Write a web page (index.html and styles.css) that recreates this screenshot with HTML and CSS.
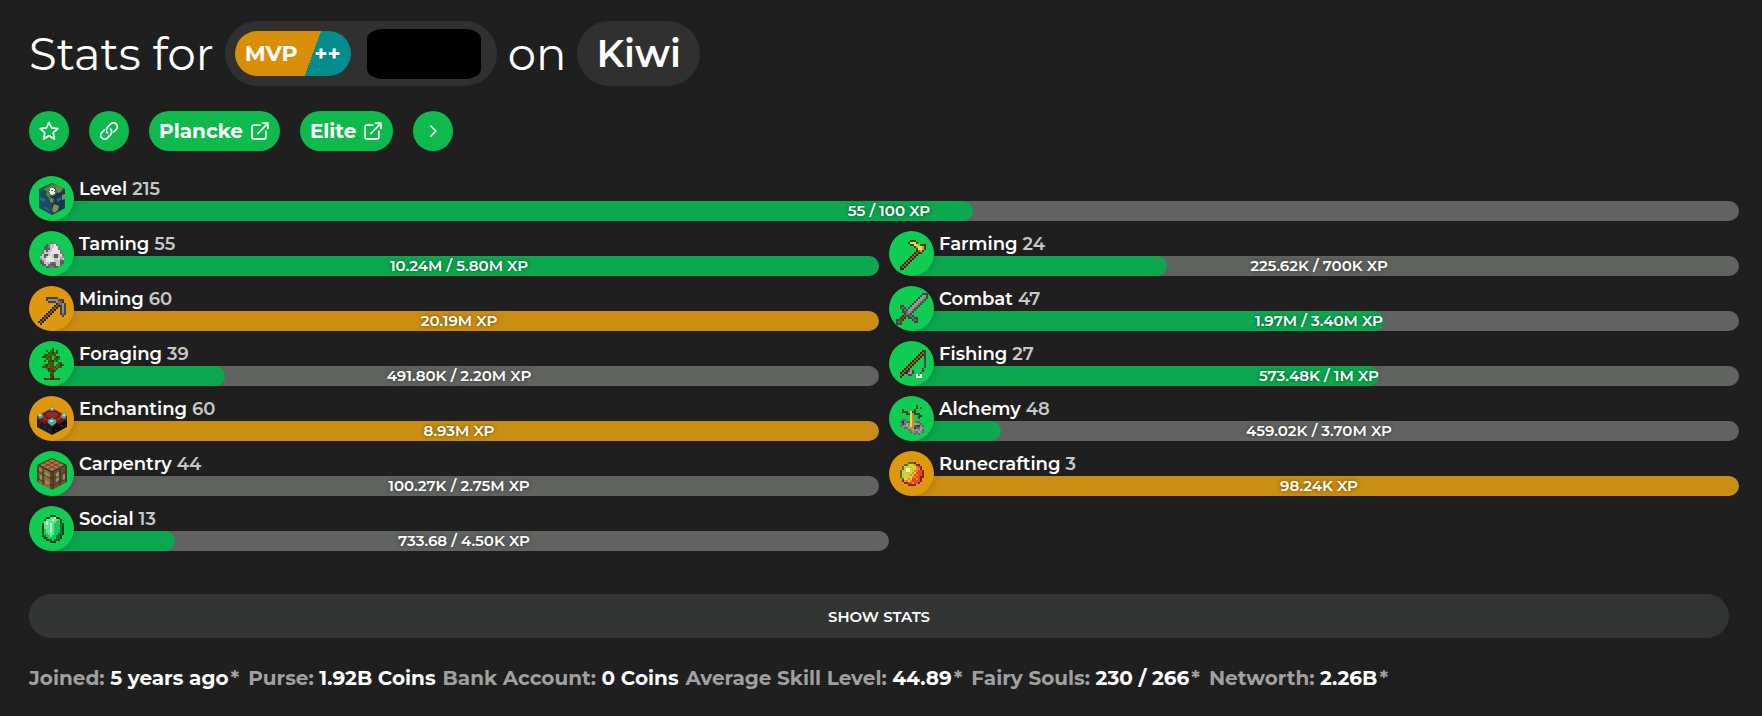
FILE: index.html
```html
<!DOCTYPE html>
<html lang="en">

<head>
  <meta charset="UTF-8" />
  <meta name="viewport" content="width=device-width, initial-scale=1.0" />
  <title>Stats on Kiwi</title>
  <link rel="stylesheet" href="styles.css">
</head>

<body>
  <main class="profile">
    <h1 class="title">
      <span>Stats for</span>
      <span class="pill player">
        <span class="rank"><span>MVP</span><span class="plus">++</span></span>
        <span class="player-name"></span>
      </span>
      <span>on</span>
      <span class="pill">Kiwi</span>
    </h1>

    <nav class="links">
      <button class="chip round" aria-label="Favorite">
        <svg class="icon" viewBox="0 0 24 24"><path d="M12 1.500l3.100 6.800 7.400.8-5.500 5 1.500 7.400-6.500-3.700-6.500 3.700 1.500-7.400-5.500-5 7.400-.8z" /></svg>
      </button>
      <button class="chip round" aria-label="Copy link">
        <svg class="icon" viewBox="0 0 24 24"><path d="M10.300 14.200a4.600 4.600 0 0 1-.3-6.500l4.200-4.200a4.600 4.600 0 0 1 6.500 6.500l-3 3M13.700 9.800a4.600 4.600 0 0 1 .3 6.500l-4.200 4.200a4.600 4.600 0 0 1-6.500-6.500l3-3" /></svg>
      </button>
      <a class="chip" href="#plancke">Plancke
        <svg class="icon" viewBox="0 0 24 24"><path d="M12 5H4.500a2 2 0 0 0-2 2v12.500a2 2 0 0 0 2 2H17a2 2 0 0 0 2-2V12M15 2.500h6.500V9M21.500 2.500L9.500 15" /></svg>
      </a>
      <a class="chip" href="#elite">Elite
        <svg class="icon" viewBox="0 0 24 24"><path d="M12 5H4.500a2 2 0 0 0-2 2v12.500a2 2 0 0 0 2 2H17a2 2 0 0 0 2-2V12M15 2.500h6.500V9M21.500 2.500L9.500 15" /></svg>
      </a>
      <button class="chip round" aria-label="More links">
        <svg class="icon" viewBox="0 0 24 24"><path d="M9.500 6l6 6-6 6" /></svg>
      </button>
    </nav>

    <section class="skills">
      <div class="skill wide">
        <div class="skill-icon">
          <svg viewBox="0 0 32 32">
            <path fill="#1d4a63" d="M16 0l13 6v19l-13 7-13-7V6z" />
            <path fill="#17384f" d="M16 13l13-7v19l-13 7z" />
            <path fill="#5f7f3c" d="M9 5l7-4 4 1-2 4 3 3-3 4-3-1-2 3-3-3 1-4-4-1z" />
            <path fill="#6c8a43" d="M19 2l8 3-2 4-3 1-2-3zM13 14l5 2-1 4-3-1z" />
            <path fill="#8e8a52" d="M18 21l5 2-1 4-4 3-2-3zM26 12l3-1v5l-3 1z" />
            <path fill="#e7eef0" d="M14 5h4v1h1v2h-1v1h1v2h-2v1h-2v-1h-1V9h-1V8h1z" />
            <path fill="#5f7f3c" d="M15 7h2v1h-2z" />
            <path fill="#2f6883" d="M4 14l5 2v3l-5-2zM8 23l5 3v2l-5-3zM21 16l4-2v3l-4 2z" />
          </svg>
        </div>
        <div class="skill-name">Level <span class="level">215</span></div>
        <div class="bar"><div class="fill" style="width: 55%"></div><span class="xp">55 / 100 XP</span></div>
      </div>

      <div class="skill">
        <div class="skill-icon"><svg viewBox="0 0 16 16" data-icon="egg"></svg></div>
        <div class="skill-name">Taming <span class="level">55</span></div>
        <div class="bar"><div class="fill" style="width: 100%"></div><span class="xp">10.24M / 5.80M XP</span></div>
      </div>
      <div class="skill">
        <div class="skill-icon"><svg viewBox="0 0 16 16" data-icon="hoe"></svg></div>
        <div class="skill-name">Farming <span class="level">24</span></div>
        <div class="bar"><div class="fill" style="width: 32.2%"></div><span class="xp">225.62K / 700K XP</span></div>
      </div>

      <div class="skill maxed">
        <div class="skill-icon"><svg viewBox="0 0 16 16" data-icon="pickaxe"></svg></div>
        <div class="skill-name">Mining <span class="level">60</span></div>
        <div class="bar"><div class="fill" style="width: 100%"></div><span class="xp">20.19M XP</span></div>
      </div>
      <div class="skill">
        <div class="skill-icon"><svg viewBox="0 0 16 16" data-icon="sword"></svg></div>
        <div class="skill-name">Combat <span class="level">47</span></div>
        <div class="bar"><div class="fill" style="width: 57.9%"></div><span class="xp">1.97M / 3.40M XP</span></div>
      </div>

      <div class="skill">
        <div class="skill-icon"><svg viewBox="0 0 16 16" data-icon="sapling"></svg></div>
        <div class="skill-name">Foraging <span class="level">39</span></div>
        <div class="bar"><div class="fill" style="width: 22.4%"></div><span class="xp">491.80K / 2.20M XP</span></div>
      </div>
      <div class="skill">
        <div class="skill-icon"><svg viewBox="0 0 16 16" data-icon="rod"></svg></div>
        <div class="skill-name">Fishing <span class="level">27</span></div>
        <div class="bar"><div class="fill" style="width: 57.3%"></div><span class="xp">573.48K / 1M XP</span></div>
      </div>

      <div class="skill maxed">
        <div class="skill-icon">
          <svg viewBox="0 0 32 32">
            <path fill="#1c1926" d="M1 13l15 8v11L1 24z" />
            <path fill="#0e0c14" d="M31 13l-15 8v11l15-8z" />
            <path fill="#a01f1f" d="M16 5l15 8-15 8-15-8z" />
            <path fill="#7a1518" d="M1 13l15 8 15-8v4l-5 2-2 2-3-1-5 4-5-4-3 1-2-2-5-2z" />
            <path fill="#b02c2a" d="M16 6l12 7-12 6-12-6z" />
            <path fill="#54201f" d="M11 8h10l4 4-4 4H11l-4-4z" />
            <path fill="#8b2b2b" d="M12 9h8l3 3-3 3h-8l-3-3z" />
            <path fill="#39b5a5" d="M14 5l2-1 2 1v2l-2 1-2-1zM2 12l2-2 3 2v2l-3 2-2-2zM25 12l3-2 2 2v2l-2 2-3-2zM12 17l4-2 4 2v3l-4 3-4-3z" />
            <path fill="#9cebdc" d="M15 5h2v1h-2zM3 11h2v2H3zM27 11h2v2h-2zM14 17h3v2h-3z" />
            <path fill="#332b45" d="M3 19h2v2H3zM8 23h2v2H8zM12 26h2v2h-2zM19 27h2v1h-2zM25 22h2v2h-2zM6 25h1v1H6z" />
          </svg>
        </div>
        <div class="skill-name">Enchanting <span class="level">60</span></div>
        <div class="bar"><div class="fill" style="width: 100%"></div><span class="xp">8.93M XP</span></div>
      </div>
      <div class="skill">
        <div class="skill-icon"><svg viewBox="0 0 16 16" data-icon="brewing"></svg></div>
        <div class="skill-name">Alchemy <span class="level">48</span></div>
        <div class="bar"><div class="fill" style="width: 12.4%"></div><span class="xp">459.02K / 3.70M XP</span></div>
      </div>

      <div class="skill">
        <div class="skill-icon">
          <svg viewBox="0 0 32 32">
            <path fill="#8a6b40" d="M1 7l15 8v17L1 24z" />
            <path fill="#67502e" d="M31 7l-15 8v17l15-8z" />
            <path fill="#4a2d1a" d="M16 0l15 7-15 8L1 7z" />
            <path fill="#b4764a" d="M16 1l12 6-12 6L4 7z" />
            <path stroke="#6b4226" fill="none" d="M8 5l12 6M12 3l12 6M12 11l12-6M8 9l12-6" />
            <path stroke="#33240f" fill="none" d="M2 8v16M7 10v17M15 14v17M17 14v17M24 11v16M30 8v16" />
            <path stroke="#49351b" fill="none" d="M1 13l15 8 15-8M1 20l15 8 15-8" />
            <path fill="#a98a58" d="M3 10l3 2v2l-3-2zM9 14l4 2v3l-4-2zM9 22l4 2v3l-4-2zM20 21l3-2v3l-3 2z" />
            <path fill="#8d8e8b" d="M4 17l2 1v4l-2-1zM20 15l3-1v4l-3 1zM27 17l2-1v5l-2 1z" />
          </svg>
        </div>
        <div class="skill-name">Carpentry <span class="level">44</span></div>
        <div class="bar"><div class="fill" style="width: 3.6%"></div><span class="xp">100.27K / 2.75M XP</span></div>
      </div>
      <div class="skill maxed">
        <div class="skill-icon"><svg viewBox="0 0 16 16" data-icon="cream"></svg></div>
        <div class="skill-name">Runecrafting <span class="level">3</span></div>
        <div class="bar"><div class="fill" style="width: 100%"></div><span class="xp">98.24K XP</span></div>
      </div>

      <div class="skill">
        <div class="skill-icon"><svg viewBox="0 0 16 16" data-icon="emerald"></svg></div>
        <div class="skill-name">Social <span class="level">13</span></div>
        <div class="bar"><div class="fill" style="width: 16.3%"></div><span class="xp">733.68 / 4.50K XP</span></div>
      </div>
    </section>

    <button class="show-stats">SHOW STATS</button>

    <div class="summary">
      <span>Joined: <b>5 years ago</b><i>*</i></span>
      <span>Purse: <b>1.92B Coins</b></span>
      <span>Bank Account: <b>0 Coins</b></span>
      <span>Average Skill Level: <b>44.89</b><i>*</i></span>
      <span>Fairy Souls: <b>230 / 266</b><i>*</i></span>
      <span>Networth: <b>2.26B</b><i>*</i></span>
    </div>
  </main>

  <script src="icons.js"></script>
</body>

</html>
```

FILE: styles.css
```css
* {
  box-sizing: border-box;
}

body {
  background: #1f1f1f;
  color: white;
  font-family: Montserrat, Inter, "Liberation Sans", sans-serif;
  margin: 0;
}

button {
  border: none;
  color: inherit;
  font-family: inherit;
  cursor: pointer;
}

.profile {
  padding: 21px 33px 24px 29px;
}

.title {
  display: flex;
  flex-wrap: wrap;
  align-items: center;
  gap: 11px;
  margin: 0 0 25px;
  font-size: 45px;
  font-weight: 400;
  line-height: 65px;
}

.pill {
  height: 65px;
  padding: 0 19px;
  border-radius: 33px;
  background: #303030;
  font-size: 38px;
  font-weight: 600;
}

.player {
  display: flex;
  align-items: center;
  gap: 16px;
  padding: 0 16px 0 10px;
}

.rank {
  display: flex;
  align-items: center;
  justify-content: space-between;
  width: 116px;
  height: 45px;
  padding: 0 10px;
  border-radius: 23px;
  background: linear-gradient(110deg, #d88f07 65%, #038d8d 65%);
  font-size: 22px;
  font-weight: 700;
}

.player-name {
  width: 114px;
  height: 50px;
  border-radius: 16px / 10px;
  background: black;
}

.links {
  display: flex;
  flex-wrap: wrap;
  gap: 20px;
  margin-bottom: 25px;
}

.chip {
  display: flex;
  align-items: center;
  justify-content: center;
  gap: 7px;
  height: 40px;
  padding: 0 10px;
  border-radius: 20px;
  background: #0fba4c;
  color: white;
  font-size: 20px;
  font-weight: 700;
  text-decoration: none;
}

.round {
  width: 40px;
}

.icon {
  flex: none;
  width: 20px;
  height: 20px;
  fill: none;
  stroke: white;
  stroke-width: 2;
  stroke-linecap: round;
  stroke-linejoin: round;
}

.skills {
  display: grid;
  grid-template-columns: 1fr 1fr;
  row-gap: 10px;
  margin-right: -20px;
}

.skill {
  display: grid;
  grid-template-columns: 7px 38px 1fr;
  grid-template-rows: 25px 20px;
  margin-right: 10px;
}

.skill:last-child {
  margin-right: 0;
}

.wide {
  grid-column: 1 / 3;
}

.skill-icon {
  grid-area: 1 / 1 / 3 / 3;
  z-index: 1;
  display: flex;
  align-items: center;
  justify-content: center;
  border-radius: 50%;
  background: #0fcd53;
  box-shadow: 0 0 10px rgba(0, 0, 0, 0.2);
}

.skill-icon svg {
  width: 32px;
  height: 32px;
}

.skill-name {
  grid-area: 1 / 3;
  padding-left: 5px;
  font-size: 18px;
  font-weight: 600;
  line-height: 27px;
}

.level {
  color: #c7c7c7;
}

.bar {
  grid-area: 2 / 2 / 3 / 4;
  display: grid;
  border-radius: 0 10px 10px 20px;
  background: #616361;
  overflow: hidden;
}

.fill {
  grid-area: 1 / 1;
  border-radius: 0 10px 10px 0;
  background: #0ca84f;
}

.maxed .skill-icon {
  background: #dd980e;
}

.maxed .fill {
  background: #cb8e13;
}

.xp {
  grid-area: 1 / 1;
  padding-left: 3px;
  font-size: 15px;
  font-weight: 600;
  line-height: 20px;
  text-align: center;
  text-shadow: 0 0 4px rgba(0, 0, 0, 0.5);
}

.show-stats {
  display: block;
  width: 100%;
  height: 44px;
  margin: 43px 0 27px;
  border-radius: 22px;
  background: #333534;
  font-size: 15px;
  font-weight: 600;
}

.summary {
  display: flex;
  flex-wrap: wrap;
  gap: 7px;
  color: #a0a0a0;
  font-size: 20px;
  font-weight: 700;
  line-height: 26px;
}

.summary b {
  color: white;
  font-weight: 700;
}

.summary i {
  padding: 0 2px;
  font-style: normal;
}
```

FILE: icons.js
```js
// one character per pixel, looked up in the icon's palette
const icons = {
  egg: {
    colors: { d: '#777777', s: '#8f8f8f', l: '#c4c4c4', w: '#e6e6e6', k: '#5c5c5c' },
    rows: [
      '................',
      '................',
      '.......dd.......',
      '.....kdllwd.....',
      '....kkdllwwd....',
      '....kkklwwwd....',
      '...dlkllwwwwd...',
      '...dlllwwwwwd...',
      '..dlkklwlkklwd..',
      '..llklwwlkklls..',
      '..sllwwwwllwsl..',
      '..kslwwwwlllkk..',
      '..kkllldkdllkk..',
      '...kkldkkkllk...',
      '.....kkddkk.....',
      '................'
    ]
  },
  hoe: {
    colors: { k: '#4b3d0c', y: '#e8dc52', o: '#b5a62d', b: '#8a6529', s: '#3c260d' },
    rows: [
      '................',
      '.......kkk......',
      '......kyyyk.....',
      '.......kkyyokkk.',
      '.........koyyok.',
      '..........kyyok.',
      '..........sbok..',
      '.........sbsk...',
      '........sbs.....',
      '.......sbs......',
      '......sbs.......',
      '.....sbs........',
      '....sbs.........',
      '...sbs..........',
      '..sbs...........',
      '..ss............'
    ]
  },
  pickaxe: {
    colors: { k: '#414344', g: '#8b8e91', h: '#6a6c6f', b: '#806127', s: '#33240f' },
    rows: [
      '................',
      '................',
      '.....kkkkkk.....',
      '.....kgggggkkk..',
      '......kkkkghbs..',
      '..........sbhgk.',
      '.........sbskgk.',
      '........sbs.kgk.',
      '.......sbs..kgk.',
      '......sbs...kgk.',
      '.....sbs....khk.',
      '....sbs......k..',
      '...sbs..........',
      '..sbs...........',
      '.sbs............',
      '..s.............'
    ]
  },
  sword: {
    colors: { k: '#434543', g: '#989a98', h: '#6f716f', b: '#805420', s: '#3d2b13' },
    rows: [
      '.............kkk',
      '............kggk',
      '...........kgghk',
      '..........kgghk.',
      '.........kgghk..',
      '........kgghk...',
      '..kk...kgghk....',
      '..khk.kgghk.....',
      '...khkgghk......',
      '...kkhghk.......',
      '....khhk........',
      '...sbkkhk.......',
      '..sbs.kkhkk.....',
      'kkbs....khk.....',
      'khk......kk.....',
      'kkk.............'
    ]
  },
  sapling: {
    colors: { g: '#2e5b12', l: '#3f7318', b: '#5a4a12', d: '#3b3208' },
    rows: [
      '........g.......',
      '.....g.lg.g.....',
      '......gldlg.....',
      '....gglblg......',
      '...gdlgb.ldg....',
      '.....glb.ggl....',
      '....g.gbdlg.....',
      '......gbb..gg...',
      '....ldlbg.lldg..',
      '...gbblbbblgg...',
      '.....ldbblg.....',
      '......gbdg......',
      '.......bb.......',
      '.......db.......',
      '.......bd.......',
      '....dbbddbbd....'
    ]
  },
  rod: {
    colors: { s: '#3b260d', b: '#8c6226', k: '#454545', g: '#9a9a9a', w: '#ffffff' },
    rows: [
      '................',
      '.............sk.',
      '............sbk.',
      '...........sbsk.',
      '..........sbs.k.',
      '.........sbs..k.',
      '........sbs...k.',
      '.......sbs....k.',
      '......sbs.....k.',
      '.....sbs......k.',
      '....sbs......k..',
      '...sbskgk....k..',
      '..sbssggk...k...',
      '..bs..kk..w.w...',
      '..s.......www...',
      '................'
    ]
  },
  brewing: {
    colors: { k: '#2c4a31', y: '#f0d34b', o: '#b8952b', g: '#858585', h: '#666666', l: '#a0a0a0' },
    rows: [
      '................',
      '..........k.....',
      '..........k.k...',
      '...k.....k......',
      '...kkk.ykk......',
      '.....kkyokkk....',
      '.......yo..kk...',
      '.......yo..k....',
      '...hh..yo.......',
      '..hkghhyoghh....',
      '..gkhlgyollgh...',
      '..hgglgyohkkgh..',
      '....hhlookhhlg..',
      '......hglglglh..',
      '.......hgghlgh..',
      '.........hgh....'
    ]
  },
  cream: {
    colors: { r: '#8e1f15', o: '#e04a1c', f: '#f08222', y: '#e9cf35', l: '#b5d63c', g: '#577023', w: '#f3efb0' },
    rows: [
      '................',
      '................',
      '......gggr......',
      '....gglylfrr....',
      '...gllylyyfor...',
      '...glwwylyffr...',
      '..gllwwylffoor..',
      '..glyllyfyooor..',
      '..glyylfyofoor..',
      '..glylyyffoorr..',
      '...gyyfyoofor...',
      '...rffyfoooor...',
      '....rroofoor....',
      '......rrrr......',
      '................',
      '................'
    ]
  },
  emerald: {
    colors: { k: '#07451d', d: '#0c7a32', g: '#1cc657', l: '#52ec86', w: '#c9ffdb' },
    rows: [
      '................',
      '.......kkk......',
      '.....kkllwkk....',
      '....klllwllgk...',
      '....lwllllggk...',
      '...klwlwlgggdk..',
      '...klllwlgggdk..',
      '...klllwlgggdk..',
      '...kgllwlgggdk..',
      '...kgllwlgggdk..',
      '...kgglllggddk..',
      '...kdgglggddk...',
      '....kdggggddk...',
      '.....kkdgdkk....',
      '.......kkk......',
      '................'
    ]
  }
};

document.querySelectorAll('[data-icon]').forEach(svg => {
  const icon = icons[svg.dataset.icon];
  icon.rows.forEach((row, y) => {
    [...row].forEach((char, x) => {
      if (char === '.') return;
      const pixel = document.createElementNS('http://www.w3.org/2000/svg', 'rect');
      pixel.setAttribute('x', x);
      pixel.setAttribute('y', y);
      pixel.setAttribute('width', 1);
      pixel.setAttribute('height', 1);
      pixel.setAttribute('fill', icon.colors[char]);
      svg.appendChild(pixel);
    });
  });
});
```
